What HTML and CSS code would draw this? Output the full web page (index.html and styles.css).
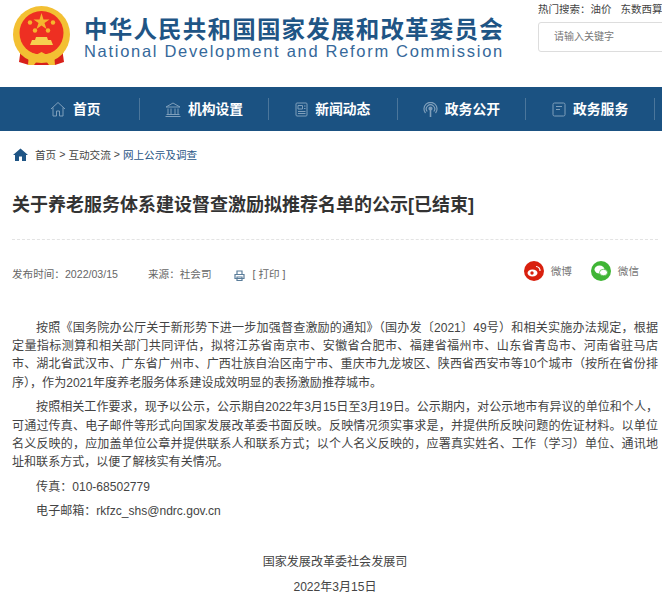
FILE: index.html
```html
<!DOCTYPE html>
<html>
<head>
    <meta charset="UTF-8">
    <title>关于养老服务体系建设督查激励拟推荐名单的公示</title>
    <link rel="stylesheet" href="styles.css">
</head>
<body>
<div class="page">
    <div class="header">
        <svg class="emblem" width="58" height="60" viewBox="0 0 58 60">
            <path d="M8 42 L6 56 L16 59 L42 59 L51 56 L49 42 Z" fill="#d8201a"/>
            <circle cx="28.500" cy="28.500" r="28.500" fill="#f3c033"/>
            <circle cx="28.500" cy="27" r="22" fill="#ee2f22"/>
            <path d="M8 38 C14 52 43 52 49 38 L51 46 C42 56 15 56 6 46 Z" fill="#f3c033"/>
            <polygon points="28.500,7 30.500,13.500 36.500,13.500 31.500,17 33.500,23 28.500,19.500 23.500,23 25.500,17 20.500,13.500 26.500,13.500" fill="#f5b52e"/>
            <circle cx="17" cy="16.500" r="2.200" fill="#f5b52e"/>
            <circle cx="40" cy="16.500" r="2.200" fill="#f5b52e"/>
            <circle cx="22" cy="24.500" r="2.200" fill="#f5b52e"/>
            <circle cx="35" cy="24.500" r="2.200" fill="#f5b52e"/>
            <path d="M23 31 H34 L35 34 H38 L40 39 H17 L19 34 H22 Z" fill="#f6d04f"/>
            <path d="M16 47 L21 50 L28.500 46 L36 50 L41 47 L42 59 H36 L33 55 H24 L21 59 H15 Z" fill="#f3c033"/>
        </svg>
        <div class="logo-text">
            <div class="logo-cn">中华人民共和国国家发展和改革委员会</div>
            <div class="logo-en">National Development and Reform Commission</div>
        </div>
        <div class="search-area">
            <div class="hot">热门搜索：<span>油价</span><span class="hot-gap">东数西算</span></div>
            <div class="search-box">请输入关键字</div>
        </div>
    </div>

    <ul class="nav">
        <li>
            <svg width="16" height="16" viewBox="0 0 16 16" fill="none" stroke="#7f9fbb" stroke-width="1"><path d="M1 8 L8 1.500 L15 8 M3 6.500 V15 H6.500 V10 H9.500 V15 H13 V6.500"/></svg>
            <a href="#">首页</a>
        </li>
        <li>
            <svg width="16" height="15" viewBox="0 0 16 15" fill="none" stroke="#7f9fbb" stroke-width="1"><path d="M1 5 L8 1 L15 5 Z M3 6.500 V12 M6 6.500 V12 M10 6.500 V12 M13 6.500 V12 M1.500 12.500 H14.500 M0.500 14.500 H15.500"/></svg>
            <a href="#">机构设置</a>
        </li>
        <li>
            <svg width="13" height="15" viewBox="0 0 13 15" fill="none" stroke="#7f9fbb" stroke-width="1"><rect x="1" y="1" width="11" height="13" rx="1"/><path d="M3 3.500 H7.500 V7 H3 Z M9 4 H10.500 M9 6.500 H10.500 M3 9.500 H10.500 M3 11.500 H10.500"/></svg>
            <a href="#">新闻动态</a>
        </li>
        <li>
            <svg width="15" height="15" viewBox="0 0 15 15" fill="none" stroke="#7f9fbb" stroke-width="1.200"><path d="M2.500 11 A6.500 6.500 0 1 1 12.500 11 M4.200 9.500 A4.200 4.200 0 1 1 10.800 9.500"/><circle cx="7.500" cy="6.500" r="1.500" fill="#7f9fbb"/><path d="M7.500 7 V15" stroke-width="1.600"/></svg>
            <a href="#">政务公开</a>
        </li>
        <li>
            <svg width="14" height="15" viewBox="0 0 14 15" fill="none" stroke="#7f9fbb" stroke-width="1"><rect x="1" y="1" width="12" height="13" rx="1.500"/><path d="M4 4.500 H10 M4 7.500 H8"/></svg>
            <a href="#">政务服务</a>
        </li>
    </ul>

    <div class="content">
        <div class="crumb">
            <svg width="15" height="13" viewBox="0 0 15 13"><path d="M7.500 0.500 L15 7 L13 7 L13 13 L9 13 L9 8.500 L6 8.500 L6 13 L2 13 L2 7 L0 7 Z" fill="#1f5585"/></svg>
            <a href="#">首页</a><span class="sep">&gt;</span><a href="#">互动交流</a><span class="sep">&gt;</span><a href="#" class="current">网上公示及调查</a>
        </div>

        <h1 class="title">关于养老服务体系建设督查激励拟推荐名单的公示[已结束]</h1>

        <div class="meta">
            <span class="date">发布时间：2022/03/15</span>
            <span class="source">来源：社会司</span>
            <svg class="printer" width="11" height="11" viewBox="0 0 11 11" fill="none" stroke="#5b7d9a" stroke-width="1.200"><path d="M3 4 V1 H8 V4 M1 4.500 H10 V8.500 H1 Z M3 7 H8 V10.500 H3 Z"/></svg>
            <a href="#" class="print">[ 打印 ]</a>
            <div class="share">
                <svg width="20" height="20" viewBox="0 0 20 20"><circle cx="10" cy="10" r="10" fill="#d9200e"/><ellipse cx="8.500" cy="12" rx="5" ry="3.500" fill="#fff"/><circle cx="8" cy="12" r="1.700" fill="#d9200e"/><path d="M12 5.500 A4 4 0 0 1 16 10" fill="none" stroke="#fff" stroke-width="1.200"/></svg>
                <span>微博</span>
                <svg class="wechat" width="20" height="20" viewBox="0 0 20 20"><circle cx="10" cy="10" r="10" fill="#3fb535"/><ellipse cx="8.500" cy="8.500" rx="5" ry="4" fill="#fff"/><ellipse cx="12.500" cy="11.500" rx="4" ry="3.200" fill="#fff" stroke="#3fb535" stroke-width="0.700"/></svg>
                <span>微信</span>
            </div>
        </div>

        <div class="article">
            <p>按照《国务院办公厅关于新形势下进一步加强督查激励的通知》（国办发〔2021〕49号）和相关实施办法规定，根据定量指标测算和相关部门共同评估，拟将江苏省南京市、安徽省合肥市、福建省福州市、山东省青岛市、河南省驻马店市、湖北省武汉市、广东省广州市、广西壮族自治区南宁市、重庆市九龙坡区、陕西省西安市等10个城市（按所在省份排序），作为2021年度养老服务体系建设成效明显的表扬激励推荐城市。</p>
            <p>按照相关工作要求，现予以公示，公示期自2022年3月15日至3月19日。公示期内，对公示地市有异议的单位和个人，可通过传真、电子邮件等形式向国家发展改革委书面反映。反映情况须实事求是，并提供所反映问题的佐证材料。以单位名义反映的，应加盖单位公章并提供联系人和联系方式；以个人名义反映的，应署真实姓名、工作（学习）单位、通讯地址和联系方式，以便了解核实有关情况。</p>
            <p>传真：010-68502779</p>
            <p>电子邮箱：rkfzc_shs@ndrc.gov.cn</p>
            <p class="sign first">国家发展改革委社会发展司</p>
            <p class="sign">2022年3月15日</p>
        </div>
    </div>
</div>
</body>
</html>
```
FILE: styles.css
```css
html, body {
    margin: 0;
    padding: 0;
    background-color: #fff;
    font-family: "Liberation Sans", "Noto Sans CJK SC", sans-serif;
    color: #333;
}
a {
    color: inherit;
    text-decoration: none;
}
.page {
    width: 662px;
    height: 594px;
    overflow: hidden;
}
.header {
    display: flex;
    height: 87px;
    padding-left: 13px;
}
.emblem {
    margin-top: 6px;
    flex: none;
}
.logo-text {
    flex: none;
    width: 419px;
    margin-left: 13px;
    margin-right: 35px;
    color: #1f5585;
    white-space: nowrap;
}
.logo-cn {
    margin-top: 18px;
    font-size: 23.500px;
    line-height: 24px;
    font-weight: bold;
    letter-spacing: 1.200px;
}
.logo-en {
    font-size: 16.500px;
    line-height: 18px;
    letter-spacing: 1.700px;
    color: #35689a;
}
.search-area {
    flex: none;
    width: 220px;
}
.hot {
    font-size: 10.500px;
    line-height: 14px;
    margin-top: 2px;
    color: #444;
    white-space: nowrap;
}
.hot-gap {
    margin-left: 9px;
}
.search-box {
    margin-top: 6px;
    height: 28px;
    line-height: 28px;
    padding-left: 15px;
    font-size: 10px;
    color: #777;
    border: 1px solid #ddd;
    border-radius: 3px;
}
.nav {
    display: flex;
    list-style-type: none;
    margin: 0;
    padding: 11px 0 0 11.500px;
    height: 33px;
    background-color: #1b5282;
}
.nav li {
    flex: none;
    box-sizing: border-box;
    width: 128.700px;
    height: 22px;
    display: flex;
    align-items: center;
    justify-content: center;
    gap: 7px;
    border-right: 1px solid #4b769b;
}
.nav a {
    color: #fff;
    font-size: 13.800px;
    font-weight: bold;
    padding-bottom: 3px;
}
.content {
    padding: 0 4px 0 12px;
}
.crumb {
    display: flex;
    align-items: center;
    margin-top: 15px;
    height: 16px;
    font-size: 10.600px;
    color: #444;
}
.crumb svg {
    margin: 0 7px 0 1px;
}
.crumb .sep {
    margin: 0 3px;
}
.crumb .current {
    color: #1f5585;
}
.title {
    margin: 0;
    padding: 31px 0 22px;
    font-size: 18px;
    line-height: 24px;
    font-weight: bold;
    color: #333;
    border-bottom: 1px dashed #e3e3e3;
}
.meta {
    display: flex;
    align-items: flex-end;
    height: 20px;
    margin-top: 21px;
    font-size: 10.600px;
    line-height: 14px;
    color: #666;
}
.date {
    margin-right: 30px;
}
.source {
    margin-right: 22px;
}
.printer {
    margin-right: 8px;
}
.share {
    display: flex;
    align-items: center;
    align-self: center;
    margin-left: auto;
    margin-right: 19px;
}
.share span {
    margin-left: 7px;
    color: #777;
}
.share .wechat {
    margin-left: 19px;
}
.article {
    margin-top: 38px;
    font-size: 12.050px;
    color: #444;
}
.article p {
    margin: 0 0 6.500px;
    line-height: 18.200px;
    text-indent: 2em;
    text-align: justify;
}
.article .sign {
    margin-bottom: 7.300px;
    text-indent: 0;
    text-align: center;
}
.article .first {
    margin-top: 32px;
}
```
